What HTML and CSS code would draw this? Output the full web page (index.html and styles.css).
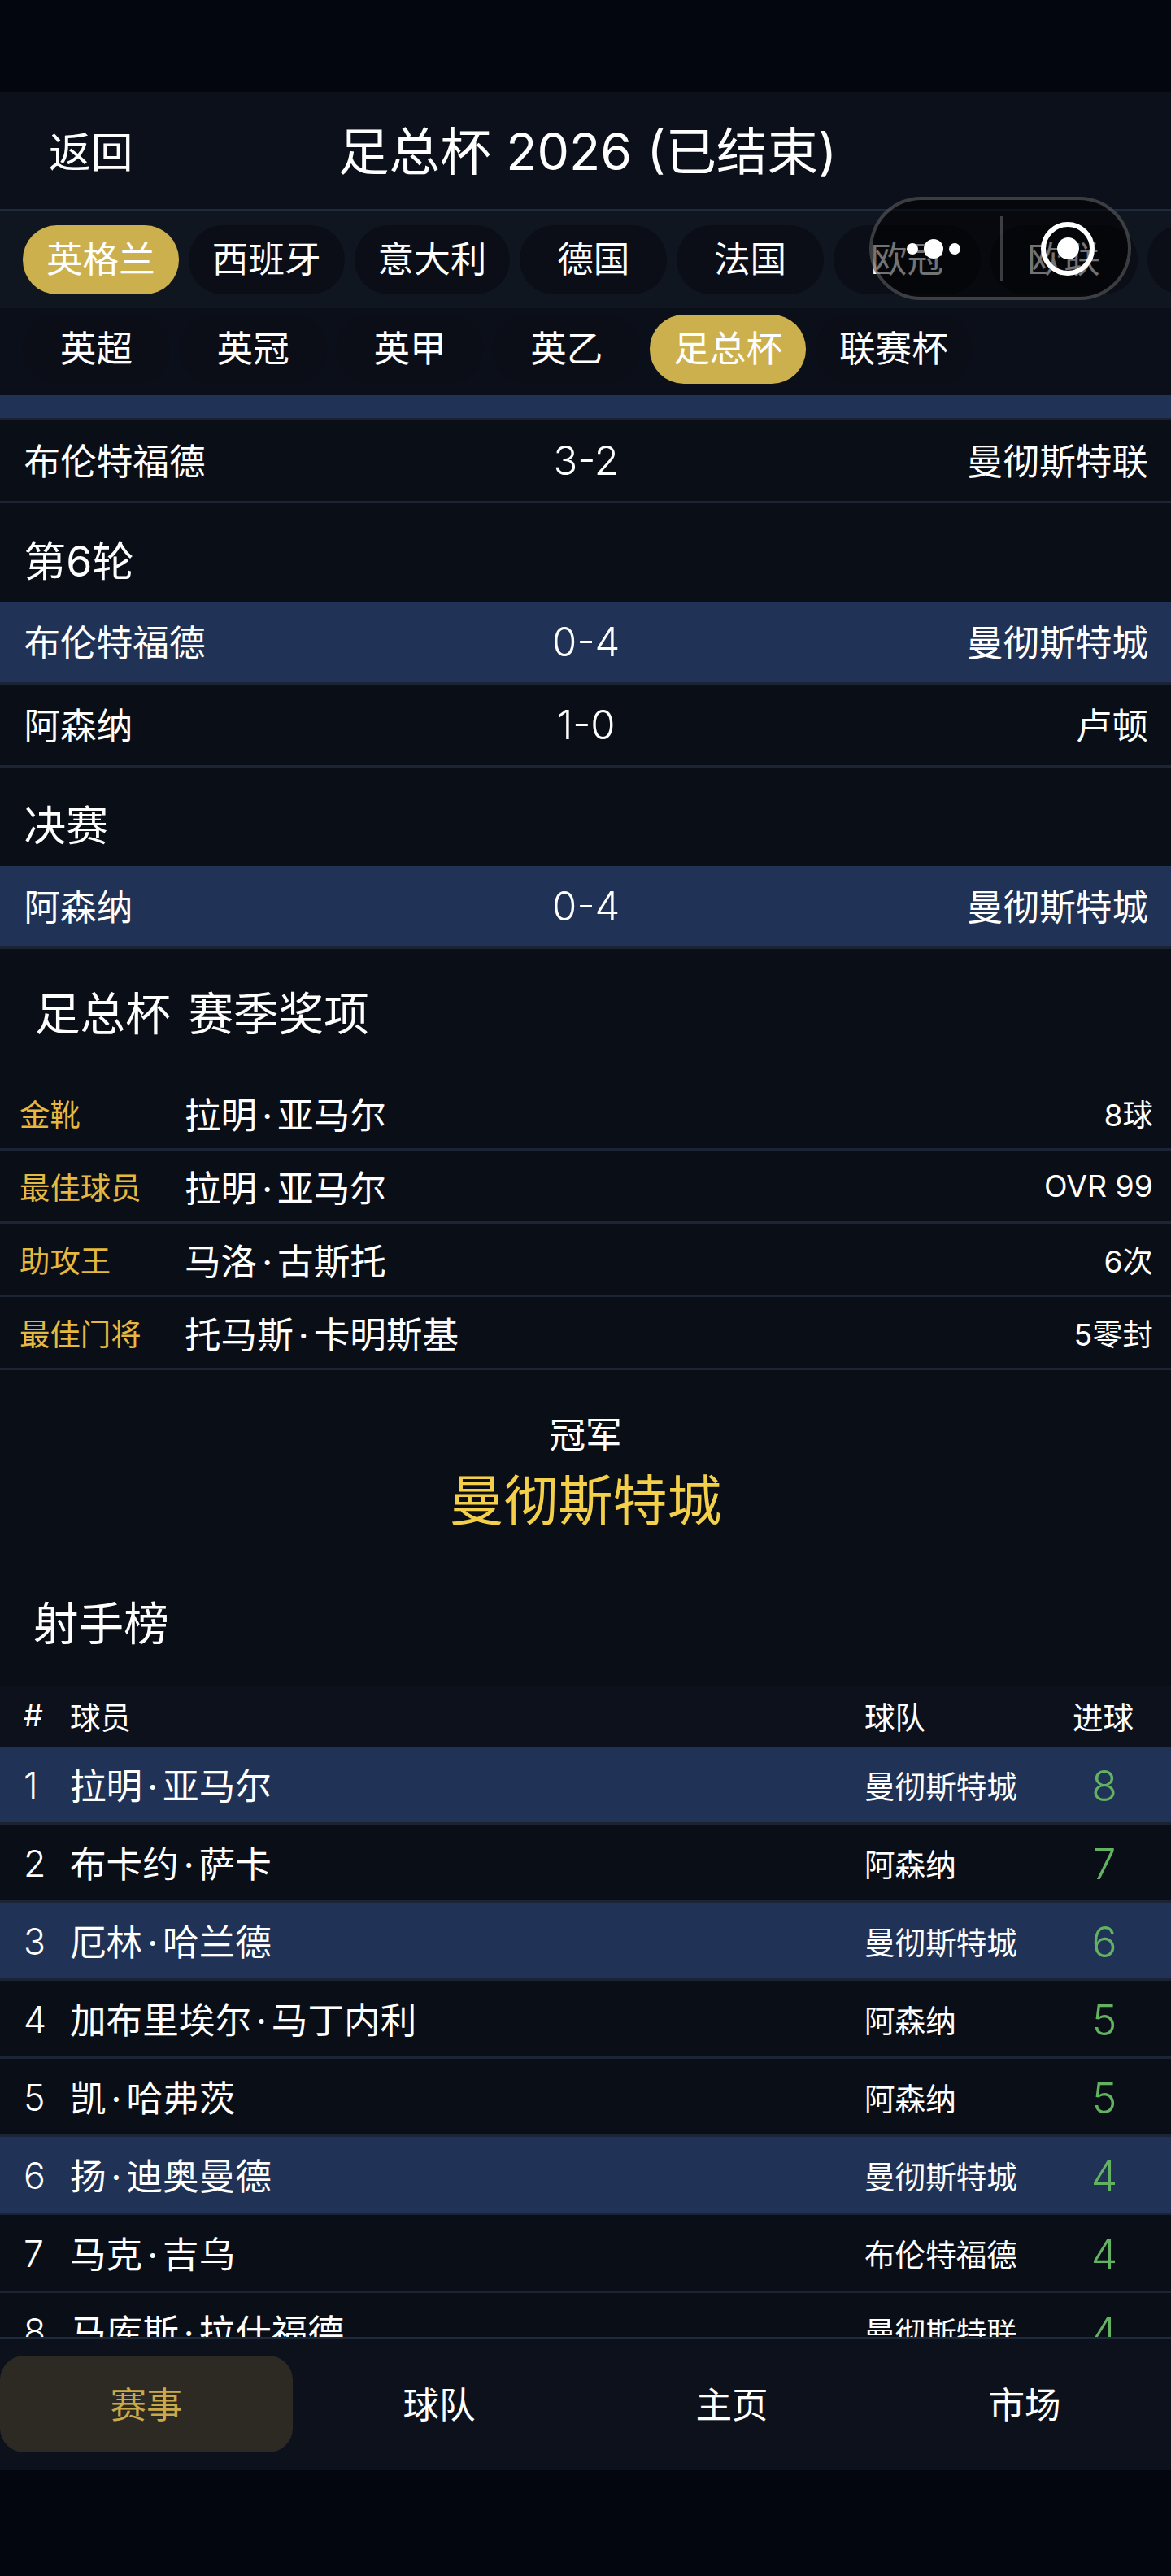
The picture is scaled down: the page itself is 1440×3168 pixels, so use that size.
FILE: index.html
```html
<!DOCTYPE html>
<html lang="zh-CN">
<head>
<meta charset="utf-8">
<title>足总杯 2026</title>
<link rel="stylesheet" href="styles.css">
</head>
<body>
<div class="app">
  <div class="status"></div>
  <header class="topbar">
    <div class="back">返回</div>
    <div class="title">足总杯 2026 (已结束)</div>
    <div></div>
  </header>
  <nav class="leagues">
    <span class="pill on">英格兰</span><span class="pill">西班牙</span><span class="pill">意大利</span><span class="pill">德国</span><span class="pill">法国</span><span class="pill">欧冠</span><span class="pill">欧联</span><span class="pill">亚冠</span>
  </nav>
  <nav class="comps">
    <span class="pill">英超</span><span class="pill">英冠</span><span class="pill">英甲</span><span class="pill">英乙</span><span class="pill on">足总杯</span><span class="pill">联赛杯</span>
  </nav>
  <main class="scroll">
    <div class="sliver"></div>
    <div class="match"><span>布伦特福德</span><span class="score">3-2</span><span class="away">曼彻斯特联</span></div>
    <h3 class="round">第6轮</h3>
    <div class="match hl"><span>布伦特福德</span><span class="score">0-4</span><span class="away">曼彻斯特城</span></div>
    <div class="match"><span>阿森纳</span><span class="score">1-0</span><span class="away">卢顿</span></div>
    <h3 class="round">决赛</h3>
    <div class="match hl"><span>阿森纳</span><span class="score">0-4</span><span class="away">曼彻斯特城</span></div>

    <h2 class="awards-title">足总杯 赛季奖项</h2>
    <div class="award"><span class="a-label">金靴</span><span class="a-name">拉明<span class="mid">·</span>亚马尔</span><span class="a-val">8球</span></div>
    <div class="award"><span class="a-label">最佳球员</span><span class="a-name">拉明<span class="mid">·</span>亚马尔</span><span class="a-val">OVR 99</span></div>
    <div class="award"><span class="a-label">助攻王</span><span class="a-name">马洛<span class="mid">·</span>古斯托</span><span class="a-val">6次</span></div>
    <div class="award"><span class="a-label">最佳门将</span><span class="a-name">托马斯<span class="mid">·</span>卡明斯基</span><span class="a-val">5零封</span></div>

    <section class="champion">
      <div class="c-label">冠军</div>
      <div class="c-team">曼彻斯特城</div>
    </section>

    <h2 class="scorers-title">射手榜</h2>
    <div class="s-row s-head"><span>#</span><span>球员</span><span>球队</span><span class="s-h-goals">进球</span></div>
    <div class="s-row hl"><span class="s-rank">1</span><span class="s-name">拉明<span class="mid">·</span>亚马尔</span><span>曼彻斯特城</span><span class="s-goals">8</span></div>
    <div class="s-row"><span class="s-rank">2</span><span class="s-name">布卡约<span class="mid">·</span>萨卡</span><span>阿森纳</span><span class="s-goals">7</span></div>
    <div class="s-row hl"><span class="s-rank">3</span><span class="s-name">厄林<span class="mid">·</span>哈兰德</span><span>曼彻斯特城</span><span class="s-goals">6</span></div>
    <div class="s-row"><span class="s-rank">4</span><span class="s-name">加布里埃尔<span class="mid">·</span>马丁内利</span><span>阿森纳</span><span class="s-goals">5</span></div>
    <div class="s-row"><span class="s-rank">5</span><span class="s-name">凯<span class="mid">·</span>哈弗茨</span><span>阿森纳</span><span class="s-goals">5</span></div>
    <div class="s-row hl"><span class="s-rank">6</span><span class="s-name">扬<span class="mid">·</span>迪奥曼德</span><span>曼彻斯特城</span><span class="s-goals">4</span></div>
    <div class="s-row"><span class="s-rank">7</span><span class="s-name">马克<span class="mid">·</span>吉乌</span><span>布伦特福德</span><span class="s-goals">4</span></div>
    <div class="s-row"><span class="s-rank">8</span><span class="s-name">马库斯<span class="mid">·</span>拉什福德</span><span>曼彻斯特联</span><span class="s-goals">4</span></div>
  </main>
  <footer class="tabs">
    <span class="tab on">赛事</span><span class="tab">球队</span><span class="tab">主页</span><span class="tab">市场</span>
  </footer>
  <div class="capsule">
    <div class="cap-dots"><i class="dot"></i><i class="dot big"></i><i class="dot"></i></div>
    <div class="cap-sep"></div>
    <div class="cap-target"><i></i></div>
  </div>
</div>
</body>
</html>
```
FILE: styles.css
```css
* { box-sizing: border-box; }
html, body { margin: 0; padding: 0; }
body {
  background: #03050f;
  color: #fff;
  font-family: Inter, "Noto Sans CJK SC", sans-serif;
  font-weight: 400;
  font-size: 44.6px;
}
.app { position: relative; width: 1440px; height: 3168px; overflow: hidden; display: flex; flex-direction: column; }
.status { height: 113px; flex: none; }
.mid { margin: 0 6px; }

.topbar {
  flex: none; height: 147px;
  background: #0c101b;
  border-bottom: 3.7px solid #1e2a3e;
  display: grid; grid-template-columns: 1fr auto 1fr; align-items: center;
}
.back { font-size: 51.7px; padding: 0 0 4px 60px; }
.title { font-size: 62.6px; word-spacing: 1px; padding: 0 0 8px 5px; }

.leagues, .comps { flex: none; display: flex; gap: 12px; padding-left: 28px; overflow: hidden; white-space: nowrap; }
.leagues { height: 119px; padding-top: 17px; background: #10161f; }
.comps { height: 107px; padding-top: 8px; background: #0b0f19; }
.pill {
  flex: none; height: 85px; min-width: 180.8px; padding: 0 29px 9px;
  border-radius: 42px; background: #0b0e17;
  display: flex; align-items: center; justify-content: center;
}
.pill.on { background: #cdb04e; }

.scroll { flex: none; height: 2388px; overflow: hidden; background: #0a0e17; }
.sliver { height: 31px; background: #203356; border-bottom: 3.7px solid #1a2233; }
.match {
  height: 102px; padding: 0 28px 5px 29.5px;
  display: grid; grid-template-columns: 1fr auto 1fr; align-items: center;
  border-bottom: 3.7px solid #1c2536;
}
.match.hl { background: #203356; border-bottom-color: #1a2233; }
.score { font-size: 49px; font-weight: 300; padding-top: 5px; }
.away { text-align: right; }
.round { margin: 0; height: 121px; padding: 14px 0 0 29.5px; display: flex; align-items: center; font-size: 51.7px; font-weight: 400; }

.awards-title { margin: 0; height: 158px; padding: 0 0 6px 43px; display: flex; align-items: center; font-size: 55.6px; font-weight: 400; word-spacing: 6px; }
.award {
  height: 90px; padding: 0 22px 0 24px;
  display: grid; grid-template-columns: 203px 1fr auto; align-items: center;
  border-bottom: 3.7px solid #1c2536;
}
.a-label { font-size: 37.4px; color: #e5b83f; }
.a-val { font-size: 37.4px; }

.champion { height: 231px; padding-top: 58px; display: flex; flex-direction: column; align-items: center; }
.c-label { height: 44px; line-height: 44px; }
.c-team { font-size: 67px; color: #f4cf4a; margin-top: 14px; line-height: 90px; }

.scorers-title { margin: 0; height: 158px; padding: 0 0 5px 41px; display: flex; align-items: center; font-size: 55.6px; font-weight: 400; }
.s-row {
  height: 96px; padding-left: 29px;
  display: grid; grid-template-columns: 57px 977px 256px 1fr; align-items: center;
  font-size: 37.6px;
  border-bottom: 3.7px solid #1c2536;
}
.s-row.hl { background: #203356; border-bottom-color: #1a2233; }
.s-head { height: 74px; padding-bottom: 4px; background: #0d111b; border-bottom: 0; }
.s-rank { font-size: 44.6px; font-weight: 300; padding-top: 2px; }
.s-name { font-size: 44.6px; padding-bottom: 2px; }
.s-goals { font-size: 51.7px; font-weight: 300; color: #62b262; width: 78px; text-align: center; padding-top: 2px; }
.s-h-goals { width: 78px; white-space: nowrap; }

.tabs {
  flex: none; height: 164px; padding: 19.5px 0 22px;
  background: #0d111c; border-top: 3.7px solid #1e2a3e;
  display: grid; grid-template-columns: repeat(4, 360px);
}
.tab { display: flex; align-items: center; justify-content: center; padding-bottom: 4px; }
.tab.on { background: #2d2a24; color: #c9a94a; border-radius: 30px; }

.capsule {
  position: absolute; left: 1069px; top: 242px; width: 322px; height: 127px;
  border: 4px solid rgba(255,255,255,.22); border-radius: 64px;
  background: rgba(0,0,0,.55);
  display: flex; align-items: center;
}
.cap-dots { width: 157px; padding-right: 7px; display: flex; align-items: center; justify-content: center; gap: 7px; }
.dot { display: block; width: 14px; height: 14px; border-radius: 50%; background: #fff; }
.dot.big { width: 24px; height: 24px; }
.cap-sep { width: 3px; height: 80px; background: rgba(255,255,255,.22); }
.cap-target {
  width: 66px; height: 66px; margin-left: 47px;
  border: 6px solid #fff; border-radius: 50%;
  display: flex; align-items: center; justify-content: center;
}
.cap-target i { display: block; width: 27px; height: 27px; border-radius: 50%; background: #fff; }
```
